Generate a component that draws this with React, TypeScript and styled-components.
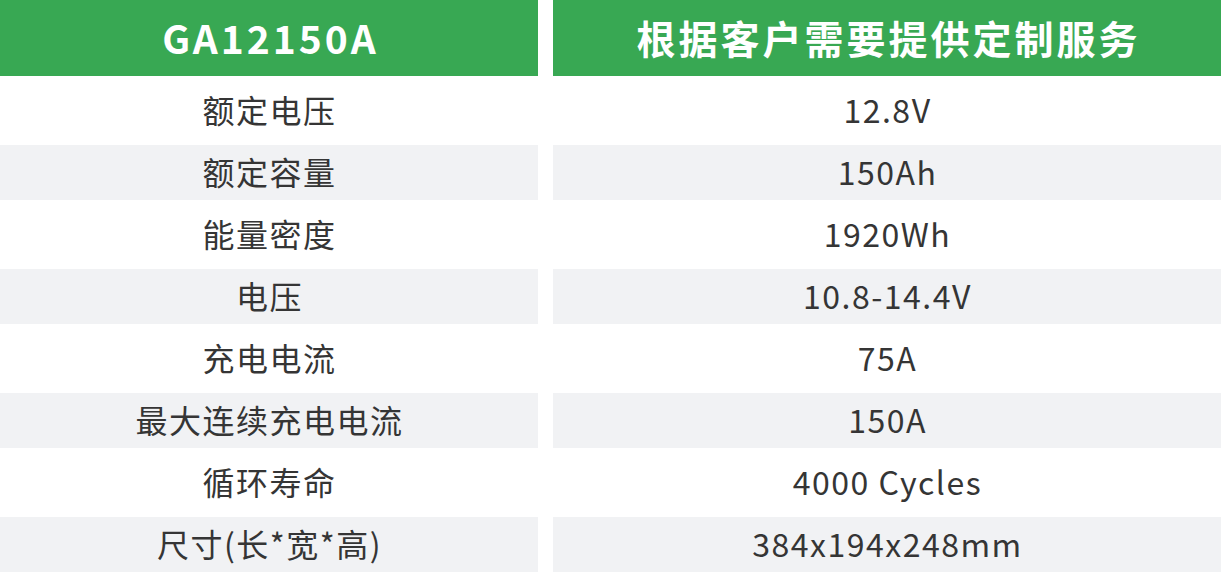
import styled, { createGlobalStyle } from 'styled-components';

const GlobalStyle = createGlobalStyle`
	html, body {
		margin: 0;
		padding: 0;
		background: #ffffff;
	}
	body {
		font-family: 'Noto Sans CJK SC', 'Noto Sans', sans-serif;
	}
`;

const specs = [
	{ label: '额定电压', value: '12.8V' },
	{ label: '额定容量', value: '150Ah' },
	{ label: '能量密度', value: '1920Wh' },
	{ label: '电压', value: '10.8-14.4V' },
	{ label: '充电电流', value: '75A' },
	{ label: '最大连续充电电流', value: '150A' },
	{ label: '循环寿命', value: '4000 Cycles' },
	{ label: '尺寸(长*宽*高)', value: '384x194x248mm' },
];

const App = () => {
	return (
		<>
			<GlobalStyle />
			<Table>
				<HeadRow>
					<HeadCell>GA12150A</HeadCell>
					<HeadCell>根据客户需要提供定制服务</HeadCell>
				</HeadRow>
				{specs.map((row, i) => (
					<Row key={row.label} striped={i % 2 === 1}>
						<Cell>{row.label}</Cell>
						<Cell>{row.value}</Cell>
					</Row>
				))}
			</Table>
		</>
	);
};

export default App;

const Table = styled.div`
	width: 1221px;
	display: flex;
	flex-direction: column;
`;

const HeadRow = styled.div`
	display: grid;
	grid-template-columns: 538px 1fr;
	column-gap: 15px;
	height: 76px;
`;

const HeadCell = styled.div`
	display: flex;
	align-items: center;
	justify-content: center;
	background-color: #38a853;
	color: #ffffff;
	font-size: 39px;
	font-weight: 700;
	letter-spacing: 3px;
	padding-left: 3px;
	padding-bottom: 2px;
`;

const Row = styled.div<{ striped: boolean }>`
	display: grid;
	grid-template-columns: 538px 1fr;
	column-gap: 15px;
	height: ${({ striped }) => (striped ? '55px' : '69px')};

	& > div {
		background-color: ${({ striped }) => (striped ? '#f1f2f4' : '#ffffff')};
	}
`;

const Cell = styled.div`
	display: flex;
	align-items: center;
	justify-content: center;
	color: #353535;
	font-size: 32px;
	letter-spacing: 1.5px;
	padding-left: 1px;
	padding-bottom: 4px;
`;
